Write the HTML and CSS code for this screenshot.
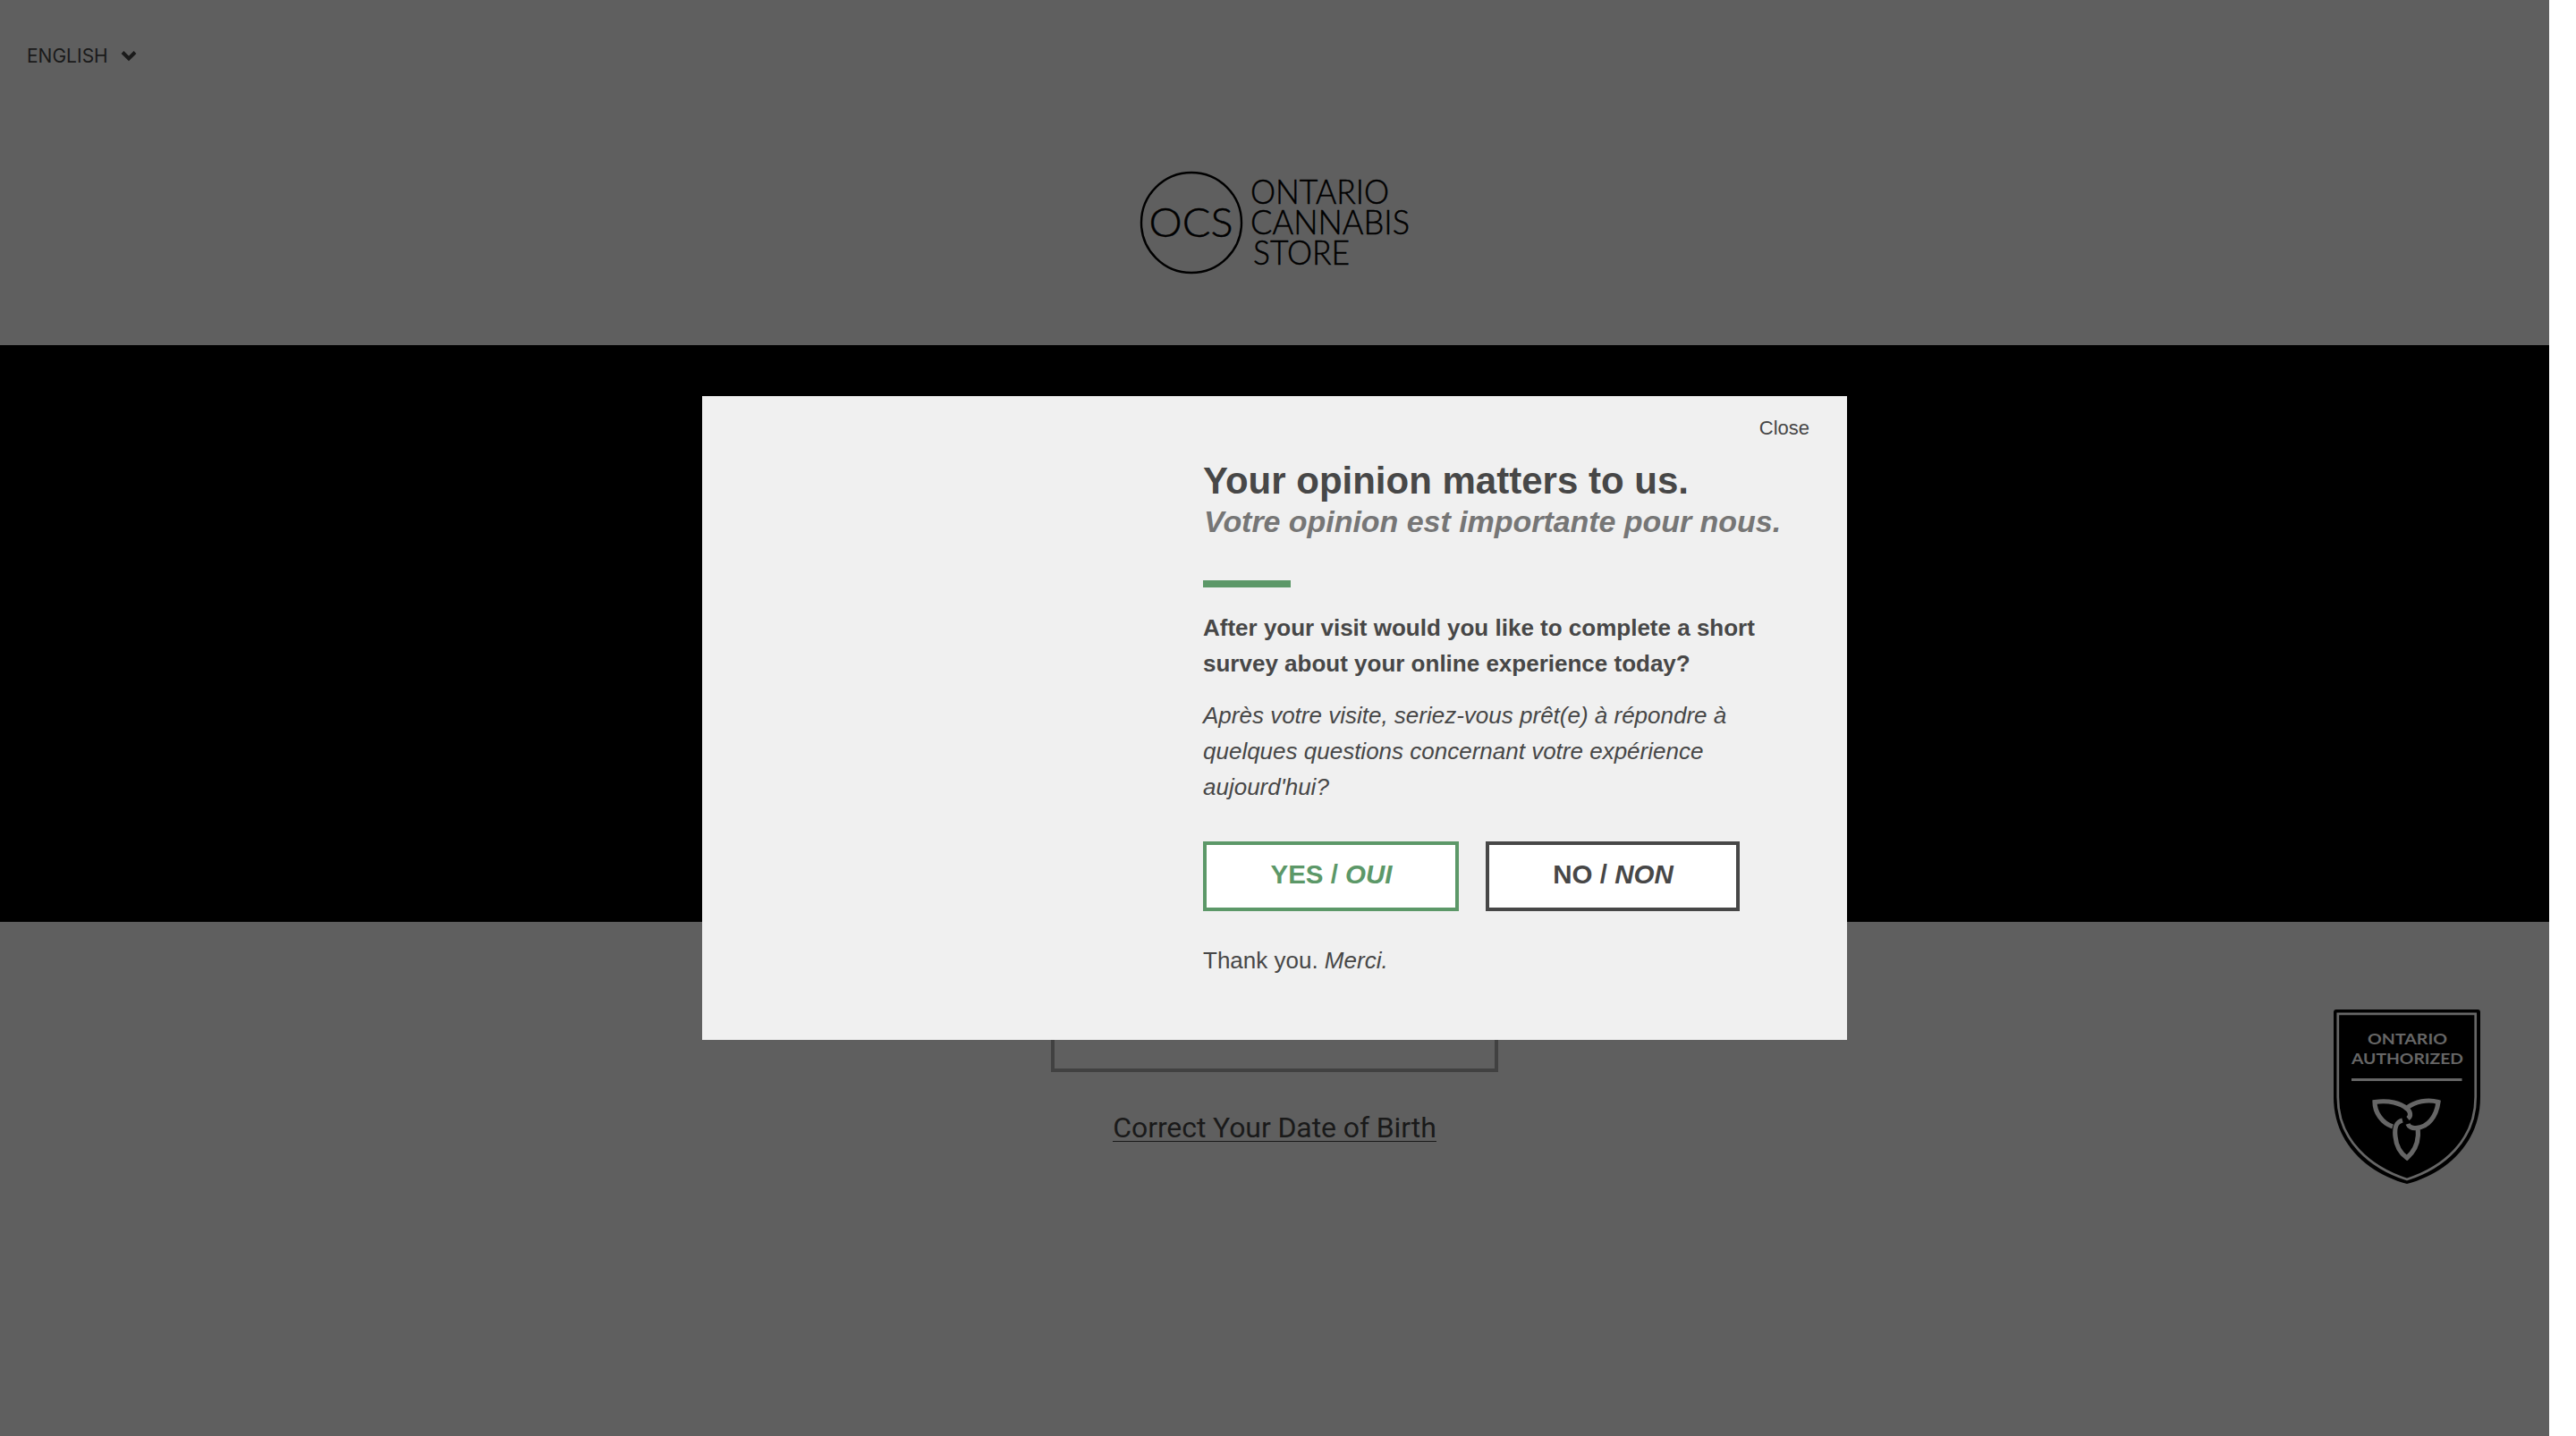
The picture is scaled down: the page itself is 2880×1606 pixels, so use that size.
FILE: index.html
```html
<!DOCTYPE html>
<html lang="en">
<head>
<meta charset="utf-8">
<title>Ontario Cannabis Store</title>
<link rel="stylesheet" href="styles.css">
</head>
<body>
<div class="page">
  <header class="header">
    <div class="language">
      <span>ENGLISH</span>
      <svg class="chevron" viewBox="0 0 18 12"><path d="M2 1.500 9 8.500 16 1.500" fill="none" stroke="#1a1a1a" stroke-width="4"/></svg>
    </div>
    <svg class="logo" viewBox="0 0 304 118">
      <circle cx="60" cy="59" r="56" fill="none" stroke="#000" stroke-width="2.4"/>
      <g class="logo-text">
        <text class="logo-ocs" x="12.500" y="75" textLength="94" lengthAdjust="spacingAndGlyphs">OCS</text>
        <text x="126" y="37.500" textLength="155" lengthAdjust="spacingAndGlyphs">ONTARIO</text>
        <text x="126" y="71.500" textLength="178" lengthAdjust="spacingAndGlyphs">CANNABIS</text>
        <text x="129" y="105.800" textLength="108" lengthAdjust="spacingAndGlyphs">STORE</text>
      </g>
    </svg>
  </header>
  <div class="hero"></div>
  <main class="gate">
    <div class="confirm"></div>
    <a class="correct">Correct Your Date of Birth</a>
  </main>
  <svg class="badge" viewBox="0 0 164 195">
    <path d="M3 0H161Q164 0 164 3V98C164 151 124 184 82 195C40 184 0 151 0 98V3Q0 0 3 0Z" fill="#000"/>
    <path d="M4.800 4.800H158.700V98C158.700 147 122 177 82 190C42 177 4.800 147 4.800 98Z" fill="none" stroke="#666" stroke-width="2.700"/>
    <g class="badge-text">
      <text x="38" y="39" textLength="89" lengthAdjust="spacingAndGlyphs">ONTARIO</text>
      <text x="20" y="61" textLength="125" lengthAdjust="spacingAndGlyphs">AUTHORIZED</text>
    </g>
    <path d="M20 78.500H143.500" stroke="#666" stroke-width="3"/>
    <g fill="none" stroke="#666" stroke-width="5.200">
      <path d="M66 131C54 127 46 115 46 103.500C62 101 75 105 82 111C86 114 87 119 83 122"/>
      <path d="M82 110C91 103 105 100 117 103.500C115 119 106 132 92 132.500C88 133 84 131 83 128"/>
      <path d="M77 124C69 126 68 133 69 142C70 153 75 161 82 166C91 158 96 148 94 133"/>
    </g>
  </svg>
</div>
<section class="modal">
  <div class="modal-body">
    <div class="close">Close</div>
    <h1>Your opinion matters to us.</h1>
    <h2>Votre opinion est importante pour nous.</h2>
    <div class="rule"></div>
    <p class="ask">After your visit would you like to complete a short<br>survey about your online experience today?</p>
    <p class="ask-fr">Après votre visite, seriez-vous prêt(e) à répondre à<br>quelques questions concernant votre expérience<br>aujourd'hui?</p>
    <div class="buttons">
      <div class="btn yes">YES /&nbsp;<i>OUI</i></div>
      <div class="btn no">NO /&nbsp;<i>NON</i></div>
    </div>
    <p class="thanks">Thank you. <i>Merci.</i></p>
  </div>
</section>
</body>
</html>
```

FILE: styles.css
```css
* { box-sizing: border-box; }
body { margin: 0; background: #fff; font-family: "Liberation Sans", Arial, sans-serif; }
h1, h2, p { margin: 0; }
.page { width: 2850px; height: 1606px; background: #5f5f5f; position: relative; overflow: hidden; }
.header { height: 386px; display: flex; flex-direction: column; align-items: center; }
.language { align-self: flex-start; display: flex; align-items: center; gap: 14px; margin: 50px 0 0 30px; height: 25px; font: 21px/25px Inter, sans-serif; color: #1a1a1a; }
.chevron { width: 18px; height: 12px; }
.logo { width: 304px; height: 118px; margin: 115px 0 0 -2px; overflow: visible; }
.logo-text { font-family: Lato, sans-serif; font-weight: 300; font-size: 36.5px; fill: #000; stroke: #000; stroke-width: 0.5px; }
.logo-ocs { font-size: 45px; }
.hero { height: 645px; background: #000; }
.gate { display: flex; flex-direction: column; align-items: center; padding-top: 68px; }
.confirm { width: 500px; height: 100px; border: 4px solid #414141; }
.correct { margin-top: 40px; height: 38px; font: 32px/44px Roboto, sans-serif; letter-spacing: -0.1px; color: #1a1a1a; border-bottom: 1px solid #1a1a1a; }
.badge { position: absolute; left: 2609px; top: 1129px; width: 164px; height: 195px; }
.badge-text { font-family: Lato, sans-serif; font-weight: 700; font-size: 17.5px; fill: #666; }
.modal { position: absolute; left: 785px; top: 443px; width: 1280px; height: 720px; background: #f0f0f0; color: #474747; padding: 22px 42px 0 560px; }
.modal-body { display: flex; flex-direction: column; }
.close { align-self: flex-end; font-size: 22px; line-height: 28px; }
h1 { margin-top: 21px; font-size: 42px; line-height: 48px; white-space: nowrap; }
h2 { padding-left: 1px; font-size: 34px; line-height: 42px; letter-spacing: -0.04px; font-style: italic; color: #767676; white-space: nowrap; }
.rule { width: 98px; height: 8px; margin-top: 45px; background: #5c9868; }
.ask, .ask-fr, .thanks { font-size: 26px; line-height: 40px; white-space: nowrap; }
.ask { margin-top: 25px; font-weight: 700; }
.ask-fr { margin-top: 18px; font-style: italic; }
.buttons { display: flex; gap: 30px; margin-top: 41px; }
.btn { height: 78px; display: flex; justify-content: center; padding-left: 1px; border: 4px solid; background: #fff; font-size: 29.5px; line-height: 66px; font-weight: 700; }
.yes { width: 286px; color: #5c9868; }
.no { width: 284px; }
.thanks { margin-top: 35px; }
```
